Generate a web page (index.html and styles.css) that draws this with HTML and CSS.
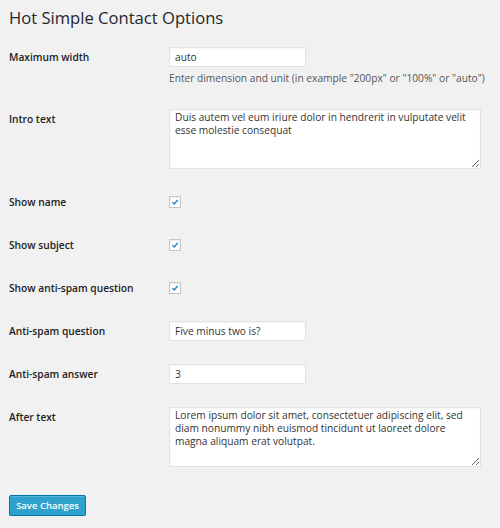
FILE: index.html
```html
<!DOCTYPE html>
<html>
<head>
<meta charset="utf-8">
<link rel="stylesheet" href="styles.css">
</head>
<body>
<div class="wrap">
  <h1 class="title">Hot Simple Contact Options</h1>
  <form class="form">
    <div class="row">
      <label class="label">Maximum width</label>
      <div class="field">
        <input class="text" type="text" value="auto">
        <p class="desc">Enter dimension and unit (in example "200px" or "100%" or "auto")</p>
      </div>
    </div>
    <div class="row">
      <label class="label">Intro text</label>
      <div class="field">
        <textarea class="area">Duis autem vel eum iriure dolor in hendrerit in vulputate velit esse molestie consequat</textarea>
      </div>
    </div>
    <div class="row">
      <label class="label">Show name</label>
      <div class="field check-field"><span class="check"><svg viewBox="0 0 12 12" width="12" height="12"><path d="M3 6.2 L5.1 8.3 L9.2 3.6" fill="none" stroke="#1e8cbe" stroke-width="1.8"/></svg></span></div>
    </div>
    <div class="row">
      <label class="label">Show subject</label>
      <div class="field check-field"><span class="check"><svg viewBox="0 0 12 12" width="12" height="12"><path d="M3 6.2 L5.1 8.3 L9.2 3.6" fill="none" stroke="#1e8cbe" stroke-width="1.8"/></svg></span></div>
    </div>
    <div class="row">
      <label class="label">Show anti-spam question</label>
      <div class="field check-field"><span class="check"><svg viewBox="0 0 12 12" width="12" height="12"><path d="M3 6.2 L5.1 8.3 L9.2 3.6" fill="none" stroke="#1e8cbe" stroke-width="1.8"/></svg></span></div>
    </div>
    <div class="row">
      <label class="label">Anti-spam question</label>
      <div class="field">
        <input class="text" type="text" value="Five minus two is?">
      </div>
    </div>
    <div class="row">
      <label class="label">Anti-spam answer</label>
      <div class="field">
        <input class="text" type="text" value="3">
      </div>
    </div>
    <div class="row">
      <label class="label">After text</label>
      <div class="field">
        <textarea class="area">Lorem ipsum dolor sit amet, consectetuer adipiscing elit, sed diam nonummy nibh euismod tincidunt ut laoreet dolore magna aliquam erat volutpat.</textarea>
      </div>
    </div>
    <div class="submit">
      <button type="button" class="button">Save Changes</button>
    </div>
  </form>
</div>
</body>
</html>
```

FILE: styles.css
```css
html, body {
  margin: 0;
  padding: 0;
  background: #f1f1f1;
}
body {
  font-family: "Open Sans", "Liberation Sans", sans-serif;
  color: #444;
  font-size: 10.2px;
}
.wrap {
  padding: 0 9px;
}
.title {
  margin: 0;
  padding: 6px 0 0;
  font-size: 16.6px;
  font-weight: 400;
  line-height: 23px;
  color: #23282d;
  height: 29.5px;
}
.form {
  margin: 0;
}
.row {
  display: grid;
  grid-template-columns: 160px 1fr;
  padding: 11.5px 0;
}
.label {
  font-weight: 600;
  color: #222;
  line-height: 20px;
  font-size: 10.2px;
}
.field {
  min-width: 0;
}
.text {
  display: block;
  box-sizing: border-box;
  width: 137px;
  height: 20px;
  margin: 0;
  padding: 0 5px;
  border: 1px solid #e2e2e2;
  background: #fff;
  box-shadow: inset 0 1px 2px rgba(0,0,0,0.04);
  font-family: inherit;
  font-size: 10.2px;
  color: #333;
  outline: none;
}
.desc {
  margin: 3px 0 0;
  line-height: 16px;
  color: #555;
  white-space: nowrap;
}
.area {
  display: block;
  box-sizing: border-box;
  width: 312px;
  height: 60px;
  margin: 0;
  padding: 1px 5px;
  border: 1px solid #e2e2e2;
  background: #fff;
  box-shadow: inset 0 1px 2px rgba(0,0,0,0.04);
  font-family: inherit;
  font-size: 10.2px;
  line-height: 12.8px;
  color: #333;
  resize: both;
  outline: none;
}
.check-field {
  height: 20px;
  display: flex;
  align-items: center;
}
.check {
  box-sizing: border-box;
  width: 12px;
  height: 12px;
  border: 1px solid #c6c6c6;
  background: #fff;
  display: flex;
  align-items: center;
  justify-content: center;
  box-shadow: inset 0 1px 2px rgba(0,0,0,0.08);
}
.check svg {
  display: block;
  width: 10px;
  height: 10px;
}
.submit {
  padding-top: 16px;
}
.button {
  box-sizing: border-box;
  height: 21px;
  width: 77px;
  padding: 0;
  background: #2ea2cc;
  border: 1px solid #0074a2;
  border-radius: 2px;
  box-shadow: inset 0 1px 0 rgba(120,200,230,0.5), 0 1px 0 rgba(0,0,0,0.15);
  color: #fff;
  font-family: inherit;
  font-weight: 600;
  font-size: 9.5px;
  line-height: 19px;
}
```
